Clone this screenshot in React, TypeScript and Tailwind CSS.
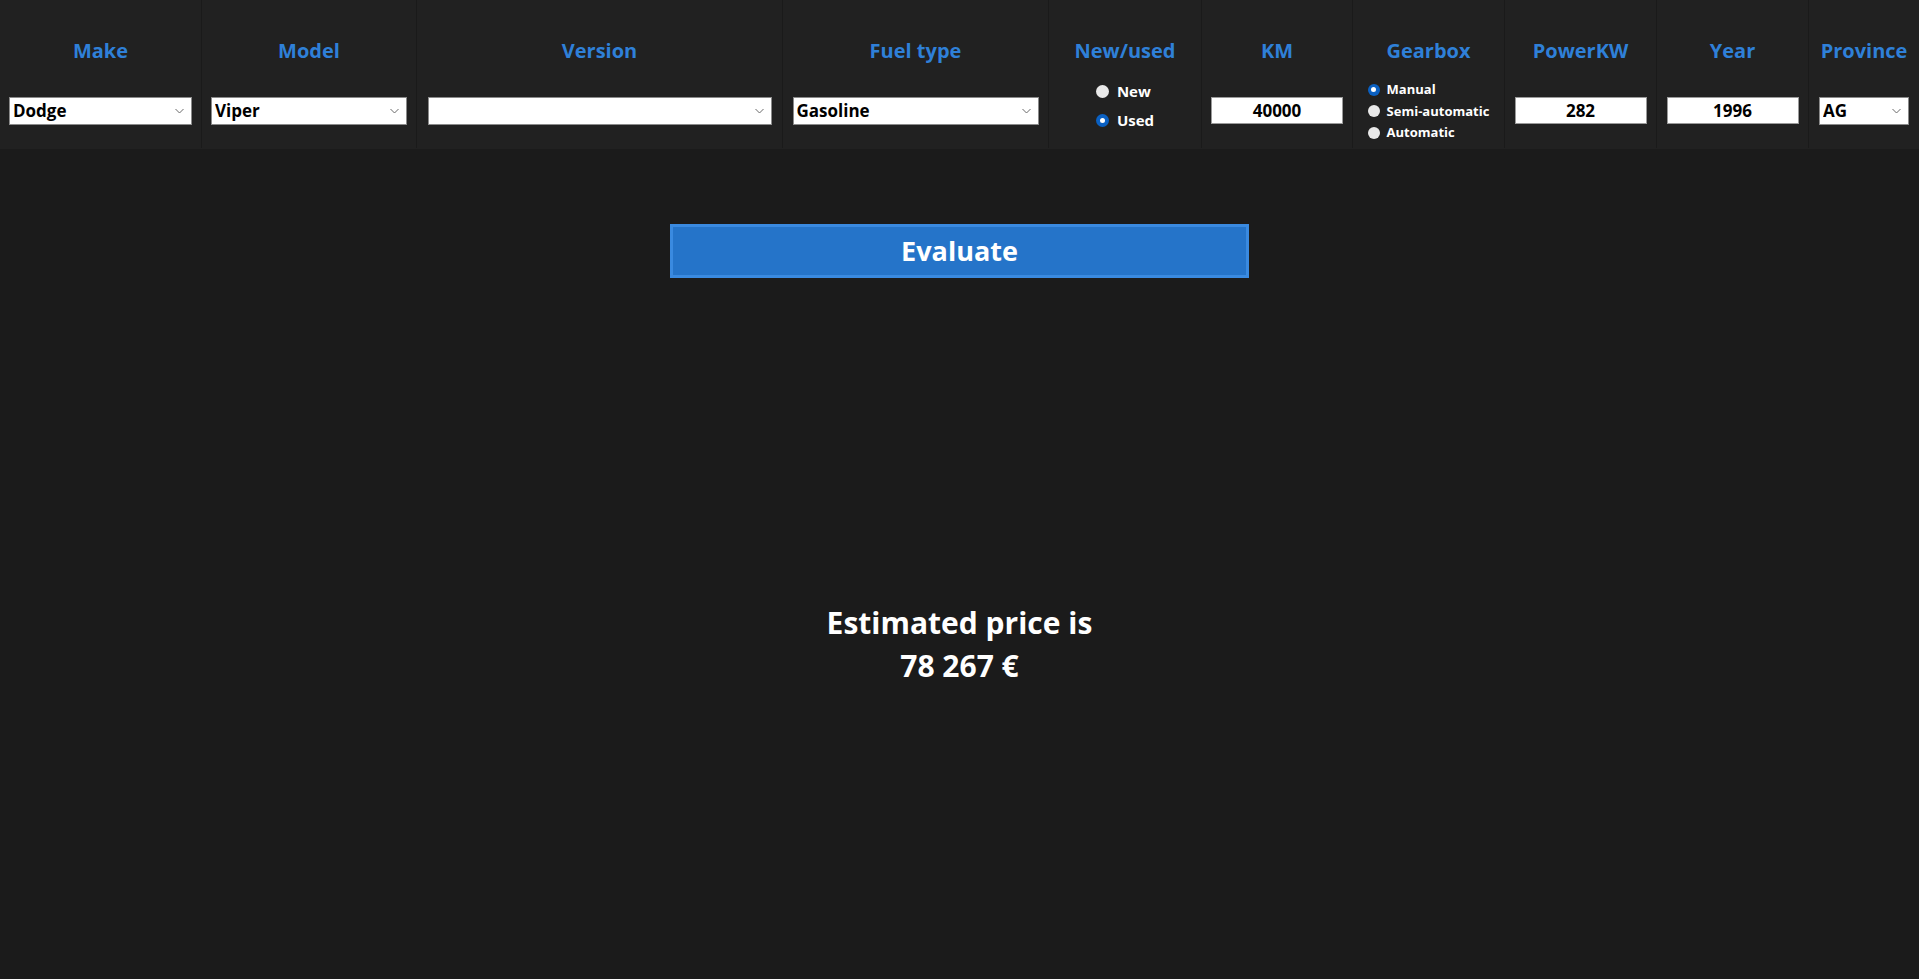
import { useState } from "react";

const FONT = "font-['Open_Sans','Noto_Sans',sans-serif]";

function Chevron() {
  return (
    <svg
      width="9"
      height="5"
      viewBox="0 0 9 5"
      className="absolute right-[8px] top-1/2 -translate-y-1/2 pointer-events-none"
    >
      <path d="M0.5 0.5 L4.5 4.5 L8.5 0.5" fill="none" stroke="#6b6b6b" strokeWidth="1" />
    </svg>
  );
}

function SelectBox({ value, width, options }: { value: string; width: string; options: string[] }) {
  const [v, setV] = useState(value);
  return (
    <div className={`relative mt-[33px] h-[28px] ${width}`}>
      <select
        value={v}
        onChange={(e) => setV(e.target.value)}
        className="appearance-none w-full h-full bg-white border border-[#8a8a8a] pl-[3px] pr-6 text-[17px] font-bold text-black outline-none"
      >
        {options.map((o) => (
          <option key={o} value={o}>
            {o}
          </option>
        ))}
      </select>
      <Chevron />
    </div>
  );
}

function NumberBox({ value }: { value: string }) {
  const [v, setV] = useState(value);
  return (
    <input
      value={v}
      onChange={(e) => setV(e.target.value)}
      className="mt-[33px] w-[132px] h-[27px] bg-white border border-[#9a9a9a] text-center text-[17px] font-bold text-black outline-none"
    />
  );
}

function Radio({ checked, size }: { checked: boolean; size: string }) {
  return checked ? (
    <span className={`${size} rounded-full bg-[#0a60c2] flex items-center justify-center shrink-0`}>
      <span className="w-[5px] h-[5px] rounded-full bg-white" />
    </span>
  ) : (
    <span className={`${size} rounded-full bg-[#e9e9e9] shrink-0`} />
  );
}

function Column({ width, label, last, children }: { width: string; label: string; last?: boolean; children: React.ReactNode }) {
  return (
    <div
      className={`${width} h-[148px] flex flex-col items-center shrink-0 ${
        last ? "" : "border-r border-[#1a1a1a]"
      }`}
    >
      <div className="mt-[38px] h-[26px] leading-[26px] text-[20px] font-bold text-[#2f80d8]">{label}</div>
      {children}
    </div>
  );
}

export default function App() {
  const [condition, setCondition] = useState("Used");
  const [gearbox, setGearbox] = useState("Manual");

  return (
    <div className={`min-h-screen bg-[#1b1b1b] ${FONT}`}>
      <div className="h-[149px] bg-[#212121] flex">
        <Column width="w-[202px]" label="Make">
          <SelectBox value="Dodge" width="w-[183px]" options={["Dodge", "Ford", "Fiat"]} />
        </Column>
        <Column width="w-[215px]" label="Model">
          <SelectBox value="Viper" width="w-[196px]" options={["Viper", "Challenger", "Charger"]} />
        </Column>
        <Column width="w-[366px]" label="Version">
          <SelectBox value="" width="w-[344px]" options={[""]} />
        </Column>
        <Column width="w-[266px]" label="Fuel type">
          <SelectBox value="Gasoline" width="w-[246px]" options={["Gasoline", "Diesel", "Electric"]} />
        </Column>
        <Column width="w-[153px]" label="New/used">
          <div className="mt-[13px] flex flex-col">
            {["New", "Used"].map((c) => (
              <button
                key={c}
                onClick={() => setCondition(c)}
                className="h-[29px] flex items-center gap-[8px] text-[15px] font-bold text-white"
              >
                <Radio checked={condition === c} size="w-[13px] h-[13px]" />
                {c}
              </button>
            ))}
          </div>
        </Column>
        <Column width="w-[151px]" label="KM">
          <NumberBox value="40000" />
        </Column>
        <Column width="w-[152px]" label="Gearbox">
          <div className="mt-[15px] flex flex-col">
            {["Manual", "Semi-automatic", "Automatic"].map((g) => (
              <button
                key={g}
                onClick={() => setGearbox(g)}
                className="h-[21.5px] flex items-center gap-[7px] text-[13px] font-bold text-white"
              >
                <Radio checked={gearbox === g} size="w-[12px] h-[12px]" />
                {g}
              </button>
            ))}
          </div>
        </Column>
        <Column width="w-[152px]" label="PowerKW">
          <NumberBox value="282" />
        </Column>
        <Column width="w-[152px]" label="Year">
          <NumberBox value="1996" />
        </Column>
        <Column width="w-[110px]" label="Province" last>
          <SelectBox value="AG" width="w-[90px]" options={["AG", "AL", "AN"]} />
        </Column>
      </div>

      <div className="flex flex-col items-center">
        <button className="mt-[75px] w-[579px] h-[54px] border-[3px] border-[#3a8ae0] bg-[#2574c9] text-[27px] font-bold text-white">
          Evaluate
        </button>

        <div className="mt-[323px] text-center text-[30px] leading-[43px] font-bold text-white">
          <p>Estimated price is</p>
          <p>78 267 €</p>
        </div>
      </div>
    </div>
  );
}
